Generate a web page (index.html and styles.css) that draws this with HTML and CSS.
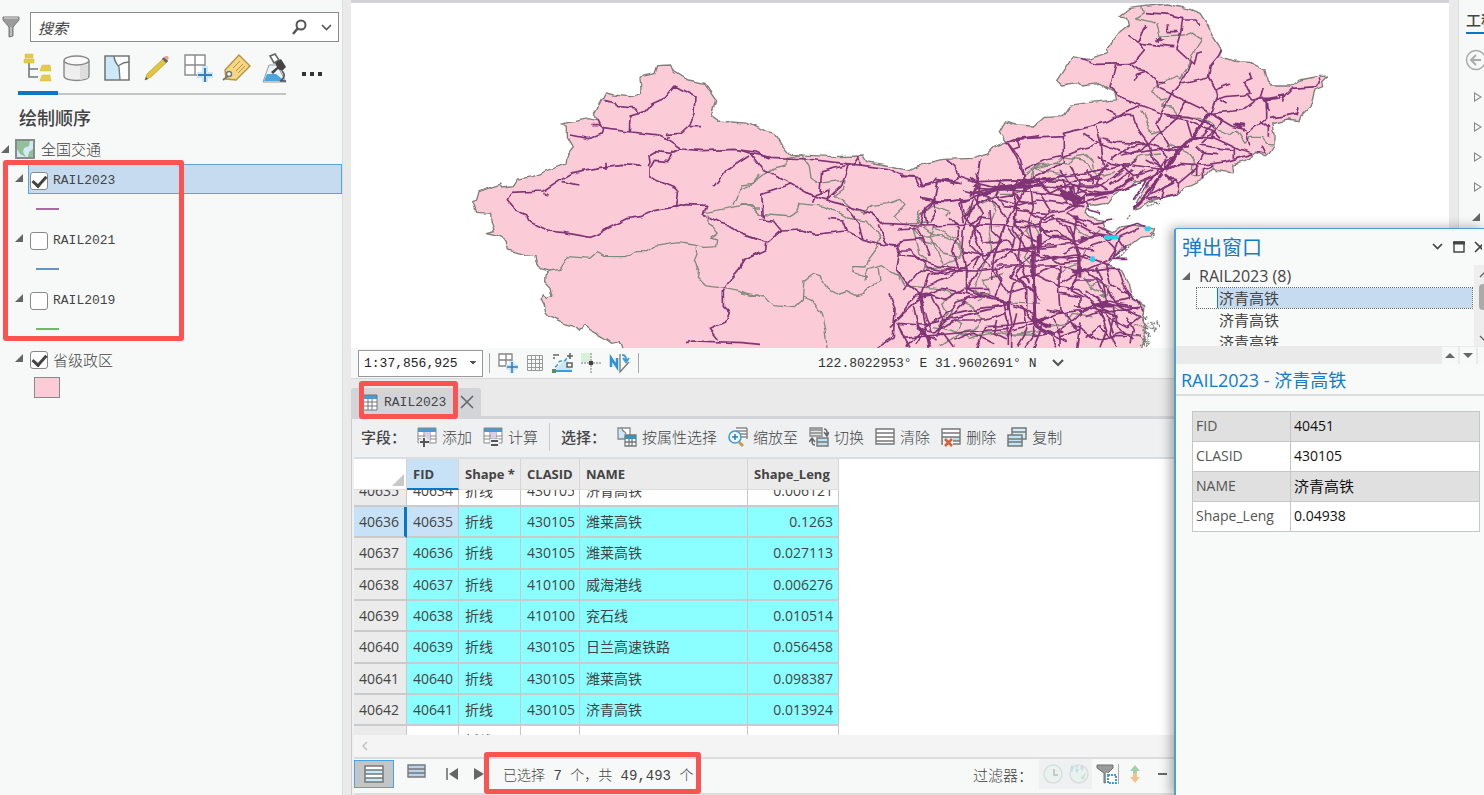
FILE: index.html
```html
<!DOCTYPE html>
<html lang="zh-CN">
<head>
<meta charset="utf-8">
<title>全国交通</title>
<link rel="stylesheet" href="styles.css">
</head>
<body>
<div class="app">
  <aside class="contents">
    <div class="search-row">
      <svg class="funnel" width="18" height="22" viewBox="0 0 18 22"><path d="M1 1h16v3l-6 7v9l-4 1V11L1 4z" fill="#9b9b9b" stroke="#777"/><path d="M2 2h14" stroke="#ddd"/><path d="M9 11v9" stroke="#ddd"/></svg>
      <div class="search-box">
        <input class="search-input" type="text" placeholder="搜索" aria-label="搜索">
        <svg width="44" height="18" viewBox="0 0 44 18" fill="none" stroke="#555"><circle cx="10" cy="7" r="4.500" stroke-width="2"/><path d="M7 10l-5 6" stroke-width="2.500"/><path d="M31 7l4.500 4.500L40 7" stroke-width="1.600"/></svg>
      </div>
    </div>
    <nav class="views">
      <button class="view active" aria-label="绘制顺序"><svg width="30" height="30" viewBox="0 0 30 30"><path d="M7 9v15h9M7 16h9" fill="none" stroke="#777" stroke-width="1.600"/><g fill="#e6cb49" stroke="#d3b937" stroke-width=".5"><path d="M3 1h8v4H3zM2 6h10v4H2zM20 12h8l1 6H18zM20 22h8l1 6H18z"/></g></svg></button>
      <button class="view" aria-label="数据源"><svg width="30" height="30" viewBox="0 0 30 30"><path d="M2 8v15c0 6 25 6 25 0V8" fill="#eee" stroke="#888" stroke-width="1.400"/><path d="M18 12h8v13l-8 2z" fill="#ddd"/><ellipse cx="14.500" cy="7.500" rx="12.500" ry="4.500" fill="#fafafa" stroke="#888" stroke-width="1.400"/></svg></button>
      <button class="view" aria-label="选择"><svg width="30" height="30" viewBox="0 0 30 30"><path d="M3 3h24v24H3z" fill="#fff"/><path d="M3 3h9l5 11 1 13H3z" fill="#cde8f8"/><path d="M12 3c0 6 3 8 5 11l1 13M16 13c3-2 5-4 11-4" fill="none" stroke="#777" stroke-width="1.400"/><path d="M3 3h24v24H3z" fill="none" stroke="#777" stroke-width="1.600"/></svg></button>
      <button class="view" aria-label="编辑"><svg width="30" height="30" viewBox="0 0 30 30"><path d="M3 27l2-6L22 5l4 3L9 24z" fill="#e2c53f" stroke="#b99a2b" stroke-width=".7"/><path d="M20 6l2-2 4 4-2 2z" fill="#666"/><path d="M22 4l2-1c3 0 3 2 2 4z" fill="#f09a93"/><path d="M3 27l1-3 2 2z" fill="#555"/></svg></button>
      <button class="view" aria-label="捕捉"><svg width="32" height="30" viewBox="0 0 32 30"><path d="M3 2h20v20H3zM13 2v20M3 12h20" fill="#fff" stroke="#8a8a8a" stroke-width="1.400"/><path d="M23 13v16M15 22h16" stroke="#cbe8fb" stroke-width="6"/><path d="M23 15v14M16 22h14" stroke="#347fb5" stroke-width="2"/></svg></button>
      <button class="view" aria-label="标注"><svg width="30" height="30" viewBox="0 0 30 30"><path d="M3 17L17 2l11 11-14 14-10-1z" fill="#f4d684" stroke="#b9923f" stroke-width="1.400"/><path d="M11 15l7-7m-4 10l7-7m-5 9l7-7" stroke="#b9923f"/><circle cx="7" cy="21" r="2.500" fill="#fff" stroke="#777" stroke-width="1.500"/><path d="M6 23l-5 4" stroke="#777" stroke-width="2"/></svg></button>
      <button class="view last" aria-label="地统计"><svg width="30" height="30" viewBox="0 0 30 30"><path d="M9 12h8l9 17H3z" fill="#e9f4fb" stroke="#999"/><path d="M7 21h9l9 7H4z" fill="#4ea5de"/><path d="M10 3l5-2 4 6-5 3z" fill="#fff" stroke="#666" stroke-width="1.600"/><path d="M15 10l6-4 5 8-4 4-4-2-5 5-2-2 6-5z" fill="#444"/><path d="M22 18c4 4 2 8-2 10h6" fill="none" stroke="#555" stroke-width="1.600"/></svg></button>
      <button class="more" aria-label="更多"><i></i><i></i><i></i></button>
    </nav>
    <h2 class="heading">绘制顺序</h2>
    <div class="row map-row"><i class="tri"></i><svg width="20" height="20" viewBox="0 0 20 20"><path d="M1 1h18v18H1z" fill="#d3eaf6" stroke="#868b8c" stroke-width="2"/><path d="M2 2h13l-1 5-5 2-1 4 3 5-6-3-3-5z" fill="#93bf9a"/><path d="M14 13l4-3v8h-5z" fill="#93bf9a"/></svg><span class="cjk">全国交通</span></div>
    <div class="row layer selected-layer"><i class="tri"></i><label class="layer-label"><input class="check" type="checkbox" checked>RAIL2023</label></div>
    <div class="legend"><i class="stroke purple"></i></div>
    <div class="row layer"><i class="tri"></i><label class="layer-label"><input class="check" type="checkbox">RAIL2021</label></div>
    <div class="legend"><i class="stroke blue"></i></div>
    <div class="row layer"><i class="tri"></i><label class="layer-label"><input class="check" type="checkbox">RAIL2019</label></div>
    <div class="legend"><i class="stroke green"></i></div>
    <div class="row layer"><i class="tri"></i><label class="layer-label cjk"><input class="check" type="checkbox" checked>省级政区</label></div>
    <div class="legend"><i class="swatch"></i></div>
    <div class="mark mark-layers"></div>
  </aside>

  <main class="workspace">
    <section class="map-view">
      <svg class="map" viewBox="1053 9 3294 1035" role="img" aria-label="全国铁路地图">
        <defs><filter id="coast" x="0" y="0" width="1" height="1" color-interpolation-filters="sRGB"><feTurbulence type="fractalNoise" baseFrequency=".035" numOctaves="1" seed="4"/><feDisplacementMap in="SourceGraphic" scale="18" xChannelSelector="R" yChannelSelector="G"/></filter></defs>
        <g filter="url(#coast)">
        <path class="land" d="M1870 1060L1858 1025 1835 1030 1810 1012 1775 992 1755 977 1738 993 1725 980 1690 970 1650 950 1637 935 1633 915 1623 895 1630 885 1642 895 1656 890 1650 862 1634 845 1635 825 1648 813 1620 805 1608 785 1605 767 1575 764 1525 750 1518 720 1492 705 1458 698 1483 692 1473 665 1472 640 1430 637 1418 605 1430 600 1437 575 1472 562 1502 552 1508 564 1540 560 1555 537 1595 530 1695 492 1698 468 1720 440 1702 410 1702 382 1685 372 1765 356 1792 362 1783 340 1816 278 1840 285 1892 290 1925 280 1920 240 1930 228 1965 220 1973 197 2012 195 2020 215 2065 243 2115 253 2147 300 2132 350 2150 363 2250 370 2300 395 2325 400 2350 440 2370 463 2500 470 2590 468 2600 485 2660 495 2700 505 2730 512 2770 492 2830 478 2920 475 2960 462 2980 442 3020 425 2998 395 3015 365 3050 375 3100 378 3130 352 3190 350 3215 315 3260 308 3350 300 3345 280 3300 250 3245 258 3235 248 3185 255 3170 242 3217 170 3265 178 3325 157 3322 145 3360 95 3385 75 3380 55 3358 50 3390 25 3430 20 3500 12 3570 28 3600 40 3620 70 3640 110 3662 145 3665 170 3700 183 3750 187 3795 210 3802 240 3815 258 3870 258 3900 240 3950 230 3982 228 3965 245 3968 260 3945 270 3930 320 3905 345 3900 365 3860 360 3815 372 3822 400 3822 435 3805 462 3795 470 3770 458 3735 482 3695 492 3698 518 3650 512 3640 502 3610 535 3560 560 3535 582 3490 592 3445 605 3420 622 3402 628 3412 600 3430 570 3448 555 3435 543 3405 542 3390 560 3360 575 3335 590 3320 610 3290 615 3265 615 3255 635 3268 653 3305 660 3312 685 3340 698 3365 680 3400 675 3445 682 3465 688 3455 708 3420 712 3390 735 3365 745 3340 770 3322 795 3365 812 3385 850 3392 885 3435 920 3425 960 3440 980 3435 1010 3422 1060z"/>
        <g class="border" transform="translate(1380 150)">
          <path d="M268 663l32-5 25-38 65 5 20-18 25 12 60 1 35-15 30 0 20-15 75-12 52 8 25 6 35-2 3-20-15-5 20-15-15-18-17-12 2-26M735 488L860 464 880 474 900 474M822 464l10-24 12-35 36-5 20-25M708 592l3 20-8 20 13 30-4 20 25 25 60 9 103 26"/>
        </g>
        <g class="border" transform="translate(2220 150)">
          <path d="M0 418l30-12 40-30 30-18 38-10 0-26 50-8 20 35 5 35 22 16 80-10-5 28-25 18 30 20 22 20 32 14 25-24 50-5 35-13 16 18-30 32 20 24 90-3M0 463l35 5 25 25 60 5 30 2 20-12 7-27 30 3 40 5 40 15 35 20 60 10 25 30 12 22-8 25-30 40-6 20-40-2 5 18 42 12-10 8 13-28 40-12 25 20 25 8 20 33 60 4 40 3 45 18-35 30 20 30-30 35M0 731l35 8 40-2 28 30 60 6 27-25 5-60 25-17 20 6 30 45 20 10 30-10 30 15 20-8 27-25 26-10-6-40M190 738l25 10 28 40 12 50 6 57M520 540l20 70 20 20-10 35 60-20 50-20 0-50-60-35-20-10-10 30 40 80M620 500l10-15-50-20-40 30-20 40 20 25 60-5M700 420l45 20 20 40-18 60 8 60-30 60-22 50M780 430l50 0 40-20-20-35 50-30M830 560l50-40 20 40M640 770l-10 30 35 20-20 30M580 830l50 10 60 25 50-20 60 10 100-10M700 720l30 15 60 20 110 5"/>
        </g>
        <g class="border" transform="translate(3000 0)">
          <path d="M425 20L430 38 405 55 455 65 470 72 480 108 550 105 570 95 605 118 575 165 570 190 545 225 540 240 528 228 470 258 458 272 480 300 500 295 485 315 515 318 530 350 600 352 635 368 650 388 690 405 710 392 735 430 750 412 785 412 800 430 822 432M425 332l20 28-5 30 15 12 40-12M100 510l0 30 75 0 5-20-40-5-35-10 60-15 40 5 20-25 35-5 20 20 5 35 30 5 30-10M500 450l10-18 50 22 20 30-5 40 30 0M340 490l40 12 40-35 60-5"/>
        </g>
        <g class="border" transform="translate(2700 450)">
          <path d="M60 180l-5 40 40 30 50 12 40 30-10 30-45-10-20-30-50-12M190 200l20-25 60-25 30-30 50-5 40-10M390 80l20-35 60-5 20-20 60 10 40 50M400 210l-20 30 20 40-30 40 30 30M560 300l-20 40-40 15-30 30M550 380l20 30 40 20 10 30 40 20M120 590l60-40 50 10 70-15 50 10 60 0M600 240l-20 20-40-10-20-30M570 405l30-8 30 12-5 25-30 5M170 450l50 20 25 40-25 30-60 10M310 370l-60 20 20 40-40 20M440 530l60-10 20-30 60 10"/>
        </g>
        <g class="rail" transform="translate(1380 150)">
          <path d="M430 148l35 8 8 14 58 4 4 18 20-8 20-22 40-18 30-36 60 32-3 50-14 38-24 22-46 3M508 247l2-49 28-8M394 224l20 0 16 12 80 10 80 8 33 15 42 28 60 5 100-4 60 8 40 18M414 210l14 28-5 12-38 16-55-11M690 230h33M565 352l5-15-3-20 20-12 48 5 25-14M570 355l13-24 42 4 15-33M570 355l0 25 15 10 60 25 10 12-5 45 30-8 60 2-10 30 10 3M652 470l-70 12-40 18-40 6-60 30-30 18-20 8-80-14-45-5-60-30-10-22-30-12-25-30 12-22 95-4 60-40 30-16 80-15 65-9 60 6M305 395l53 10M435 358v-20M250 430l16 5M745 500l38 20 20 5 35 25 62 22M900 605l-50 25-20 40-25 25-15 30 0 45 15 15-12 33-45 20 24 30M678 878l20-5 150 5 52 5M762 408l35-45 70-45M620 270l5-12"/>
        </g>
        <g class="rail" transform="translate(2220 150)">
          <path d="M0 300l30 10 60 12 110 5 120 14 120 14 50 23 50 5 8 27 25-5 15-20 70 10M30 310l40 50 85 42 60 34 100 30 80 25 35 32 100 5 200-3 135 5M70 505l-5-75 88-28M60 510l40 3 25 30-40 35-80-24M80 580l-3 20-60 28-17 27M125 543l60-3 40 13 95-10 50 25 60 15 40 5 20-17 60-5M240 430l5-65 80-20-22 65-40 35M325 345l15 0 16-25 5 25M215 455l7-20 45-15-5 30M320 475l35 45 15 50M415 520l10 35 20 30 25 5 10 25 55 5 30 35 35 5 110 3 120-15 120 0M265 505l45 5 15 40M480 600l-10 60 25 35 50 40 20-60 90-25-20-50 20-40 0-25-25-30M475 540l60-5 25 50 10 35M450 730l15 50-5 80-50 35M450 830l40-40 55-50 30-5 30 65-50 30-25 55M470 820l80 5 110-25 100-25 45-15M470 820l20 45 100-10 160-15 60-5M470 820l40 75M540 740l15 80 10 75M545 740l60-25 95 20 80 15 60 20 50 50M590 860l20-60 40-40 80-30 60 20 15 75 0 60M620 330l25 20 10 30-15 20-45-10-13 60-42-8M655 380l55 20 10-70-10 60-10 50 30 50-30 60 30 70 20 30M540 530l15-60 25-20 10 40-20 30M560 525l-5-45 35-35M670 420l60 15 60-25 110-15M580 455l100-5 90-30 80-20 50-15M800 275l40 50 13 50-3 40-25 75-5 50 40 60M800 275l20-8 80-10M820 298l18-7-5-20 15-2M670 520l-10-60 80-35 60-10 100-5M700 450l-30 90-5 60 15 70 0 60M750 480l5 60 30 30-40 50-30 40-35 60M665 600l70 15 85-20 80 20M755 650l50 80 60-20 35 40M840 450l-50 80-30 100-5 60M560 710l70-30 60-40 40-30"/>
        </g>
        <g class="rail" transform="translate(3000 0)">
          <path d="M435 38l70 5 43 10-5 40-15 52 55 50 8-35 15-5M548 60h40l10 16M385 108l28 20 18-42 10-10M405 180l25-30-10-20 100 10M505 73v22h28M465 120h25m-20-7l14 12m0-12l-14 12M245 178l40 15 105-2 22-10M390 190l20 18 30 5 30 30 5 20 150 73M440 213l-30 10-7 22M470 245h30M347 193l-17 70 35 33 45 15 90 35 60 3 60 15 25 25M575 190l-30 55-30 35-20 40-25 50 15 30 20 35M545 252l80-18 5-35 25-30 10-20M625 234l20 35 5 20-20 50M645 270l45-18M645 300l30-10 60-5 15-5-10-20-12-15 25-10-5-17M740 280l15 20 50-5 50-10 20-20 75-5 10-25M780 298l10-33M855 285l-8 20M800 295l0 60-60 45 10 40M740 390l-45-12-65-38M730 330l45-35 55 0M730 330l-100 10M810 355l85-15 5-20M630 340l-50 70-45 45-40 50-55 95M560 300l-35 60-80 70-20 20-60 15M630 340l35 25-30 45 65 30 60 20M580 410l60 5M575 410l-15-50-60-10M600 435l60 10 40 5M605 430l35-35 20 20M500 510l40-20 70 5 70-10 80-25M25 425l50-10 120-5-5-10 60-15 70-20 60-30 40-15M190 410l0 80-170 75M290 380l15 60 5 60M320 330l30 15 50 2 10 35 35 48-100-3-40-10M250 400l50 30 90 32 60-10 120-15M20 425l28 45 25 60 0 50M75 510l60-30 60-12 100-40M445 430l15 50 20 20M490 510l-120 60-90 20M370 500l30 30 60-20M290 470l40 20 60 10M410 480l-60 45-50 35-300 0M0 540l80 0 130 5 100-10M500 520l20 30-30 15-10 35M500 520l35 30 0 30-90 18M535 550l60-50M770 455l25 5-10-20M700 440v35M780 360l25 20 0 30M720 375l10 20"/>
          <path d="M800 320l12 12M795 305l20 -8M835 300l8-10M700 372l20 8M640 372l-30 35-40 12M660 300l20 12M570 365l70 30M540 455l-60-12-35-13M590 440l20 20 45 4M610 455l-20 40 0 30M640 495l-30 15 0 25M480 440l20 30-5 40M440 480l55 30M400 495l95 15M335 480l50-40 60-8M430 510l-20 25M395 505l-10 30M320 490l-25 40-60 15"/>
          <path class="trunk" d="M790 300l40-4M800 300l2 26M630 340l-52 72-45 45-33 50M705 372l30 4"/>
        </g>
        <g class="rail" transform="translate(2700 450)">
          <path d="M190 200l60-50 100-20 100-40 50-20M230 100l90 20 120 10 60 10 60-20 60 10M210 85l30 20-10 60M210 130l200-40 140-20 140-30M290 90l50 30 60-40 50 50 60-30 50 30-30 30M300 150l60 15 50-15 80 10 60 10M330 110l20 50-5 60 20 30-10 70 30 80M345 210l60 15 70-20 50 15 60 30 60 10M390 100l10 70-15 50 20 80 0 80M345 180l90 10 60-10 60-30M470 110l30 40 20-40 10 60-30 20M480 120l60 20M490 90l10 70M500 230l40 80-10 70-20 40 60 30 40 60M290 345l60 0 50-30 60 10 70-10 60 20 40 10M280 340l60-40 100-15 90-5 60-30M400 340l60-20 60 5M350 300l120-10M360 250l60 30 50-20 60 20M390 380l30-10 50-25 70 20 80-10 40 0M325 460l15-60 60-30 80 40 60 10 50 50 40 15 90-10M400 370l5 150 70-30 80-10 60-30 80 20M400 520l60 30 60-40 40-40 60 20 20 60M420 290l0-80 30-30-30-50M450 200l60 30 20 60M230 590l30-60 70-5 80-15M325 460l10 60 0 75M340 470l60 20 5 60-30 40M340 540l60-20 50 30 20 45M480 560l60-20 60 30 60-20 60 10M540 520l-10 75M600 480l20 60-20 55M430 520l-30 75M460 500l20 60 0 30M480 400l70-40 60 40 50 70 60 30M480 350l-5 60 5 70 60 60M360 390l40 40M350 350l-20 30 30 20M530 370l10-40-20-60 10-70M520 200l60 20 60-10M500 190l60 40M500 140l40 20 80-20M545 265l60-10 40 40-20 30 60 0M570 290l60-20 50-40 30-10 30 10M620 245l35 20 20 30-40 30-90 40M640 320l20-60 60-25M650 355l20 50 20 40-40 10M560 420l50 40 60 10M590 450l50 20 10 60 50 40M600 460l30-10M590 470l45 0M440 480l60 10 30 50M620 500l60 30 40-30M700 150l40-60 50-30 50-20M710 160l70-40 50-30M730 120l60-80 50-30"/>
          <path d="M0 80h45l15 30 40-12 25-8 60 8M60 145l75 10 75-8M235 95l130-5 90-2M230 115l80 5 60-15 80 5M225 75l10 35-25 30M240 125l30 15-45 30-30 30M265 150l30 20 25 35-20 60-20 60M300 100l-15 35 30 35 45 5M355 90l-15 35 20 30 50 5M320 230l25 30-10 40 20 30M240 215l-25 30-5 40 30 30-20 40M210 230l30-30 30 5M185 150l10 55 35 30 20 40M250 280l70-10 20 20M380 180l50 30 30-15M380 230l40 0 30 30 50 0M375 300l40 0M420 240l50 5 40 25 40 0M490 310l40-20 50 10M500 330l60-15 40 25M430 310l50 30 60-5M450 345l30 20 0 50M370 340l-25 35 35 45 0 60M200 370l0 45 60 30 60 10M285 350l20 40-20 50M130 450l60-35 75 0M210 440l-60 60-50 50M160 490l80-15 80-10M110 540l60-30 90 0 60-20M290 510l-10 40 40 20M350 490l-10 40-20 30M370 480l10 60-30 50M400 560l50-10 50 25M440 500l-30 30 30 20M480 430l60 10 0 60M500 420l30-30 60 0 20 40M520 470l60 5M560 500l50-20 40 20M560 560l40-30 30 30 50 0M640 500l-10 50 20 40M680 430l30 20 20 35M655 465l60 15M590 350l20 50 10 60M620 345l15 60 45 25M680 500l20 40-10 40M590 230l40 15M600 190l-30-10-20-30M540 105l60 0M560 60l20 40M510 50l30 50-10 40M610 60l-20 40 30 20M480 60l30 40M630 105l40-30 30-15M0 300l30 0 30 30 60 20 80 5M10 420l50-60 70 10 70-10M0 500l40-60 40-10 60 20M20 590l40-40 50 20M60 540l70 10 30 40M160 570l60-20 60 30M40 470l20 80M60 430l20 80 20 40"/>
          <path class="trunk" d="M480 130l40 5 20 20M490 125l35 30M500 145l55 0M510 110l15 60M480 120l20 25M398 310l0 70M400 380l5 130 45 20M415 250l0 60M520 365l30 0M535 320l5 60M90 565l-35-30M80 560l10 30M600 455l10 20M580 465l50 0M220 105l15 10M700 176l25-25 25-35 40-45M560 135l80-10 60-40M430 510l-30 10M470 545l20 0M325 450l0 30"/>
        </g>
        <g class="border isles" transform="translate(2700 450)"><path d="M690 195l-10 15M740 165l45-12M760 155l20 10M750 250l15 5-10 10M690 285l-15 20-20 20M715 465l20 12-5 25M725 510l20-10M745 515l-5 20 30-20M755 515l5 30 10-15M730 540l20 10-10 30-20 10M735 520l-5 60 10-20M770 520l12 8M700 525l20 5M695 560l25 0M720 470l15-5M710 500l30 5M725 530l35 10M740 545l15 15M720 560l20 20M735 590l15-15"/></g>
        </g>
        <g class="picked"><path d="M3318 712h32"/><path d="M3442 685h5M3440 687h6M3276 775h3M3276 780h3"/></g>
      </svg>
    </section>

    <div class="status">
      <select class="scale" aria-label="比例尺"><option>1:37,856,925</option></select>
      <i class="sep"></i>
      <svg width="20" height="20" viewBox="0 0 20 20"><path d="M1 1h13v12H1zM8 1v12M1 7h13" fill="#fff" stroke="#858585" stroke-width="1.300"/><path d="M14 8v12M8 14h12" stroke="#c5e5fa" stroke-width="5"/><path d="M14 9v11M9 14h11" stroke="#2f7bb3" stroke-width="1.500"/></svg>
      <svg width="18" height="18" viewBox="0 0 18 18"><path d="M1.500 1.500h15v15h-15zM5.500 1v15M9.500 1v15M13.500 1v15M1 5.500h15M1 9.500h15M1 13.500h15" fill="none" stroke="#999"/></svg>
      <svg width="21" height="20" viewBox="0 0 21 20"><path d="M3 17L14 5l6 12z" fill="#cbe6f7"/><path d="M3 14c4-1 2-7 7-6s3-4 8-5" fill="none" stroke="#3f9bd7" stroke-width="1.500" stroke-dasharray="4 2"/><path d="M1 2h6M15 3h6M18 0v6M15 10h5v4h-5zM1 5h2" fill="#fff" stroke="#666" stroke-width="1.600"/><path d="M2 18h18" stroke="#3f9bd7" stroke-width="2"/><path d="M0 16h4v4H0z" fill="#4d9658"/></svg>
      <svg width="20" height="20" viewBox="0 0 20 20"><path d="M0 0h9v9H0z" fill="#d8efd8"/><path d="M0 10h20M10 0v20" stroke="#777" stroke-dasharray="2 1"/><path d="M8 8h4v4H8z" fill="#444"/></svg>
      <svg width="21" height="20" viewBox="0 0 21 20"><path d="M2 14V5l6 9V5" fill="none" stroke="#2e92d4" stroke-width="2.500"/><path d="M11 1v18l9-10" fill="none" stroke="#777" stroke-width="1.300"/><path d="M13 2c4 0 4 3 4 6m-3-3l3 4 3-4" fill="none" stroke="#3f9bd7" stroke-width="2"/></svg>
      <i class="sep"></i>
      <span class="coords">122.8022953° E 31.9602691° N</span>
      <svg class="chev" width="12" height="8" viewBox="0 0 12 8"><path d="M1 1l5 5 5-5" fill="none" stroke="#555" stroke-width="2.200"/></svg>
    </div>

    <div class="tabs">
      <div class="tab"><svg width="16" height="17" viewBox="0 0 16 17"><path d="M1 1h14v15H1z" fill="#fff"/><path d="M1 1h14v4H1z" fill="#4b9bd0"/><path d="M1 1h14v15H1zM6 5v11M10 5v11M1 8h14M1 12h14" fill="none" stroke="#777"/></svg><span class="mono">RAIL2023</span><button class="close" aria-label="关闭"><svg width="14" height="14" viewBox="0 0 14 14"><path d="M1 1l12 12M13 1L1 13" stroke="#666" stroke-width="1.600"/></svg></button></div>
      <div class="mark mark-tab"></div>
    </div>

    <section class="table-panel">
      <div class="toolbar">
        <b>字段：</b>
        <button><svg width="20" height="20" viewBox="0 0 20 20"><path d="M1 1h18v15H1z" fill="#fff"/><path d="M1 1h18v4H1z" fill="#4b9bd0"/><path d="M1 1h18v15H1zM7 5v11M13 5v11M1 9h18M1 12h18" fill="none" stroke="#888"/><path d="M8 5h5v11H8z" fill="#d9cfea"/><path d="M7 10v9M2 15h10" stroke="#eef0f2" stroke-width="5"/><path d="M7 11v9M3 15h9" stroke="#555" stroke-width="2"/></svg>添加</button>
        <button><svg width="20" height="20" viewBox="0 0 20 20"><path d="M1 1h18v15H1z" fill="#fff"/><path d="M1 1h18v4H1z" fill="#4b9bd0"/><path d="M1 1h18v15H1zM7 5v11M13 5v11M1 9h18M1 12h18" fill="none" stroke="#888"/><path d="M8 5h5v6H8z" fill="#d9cfea"/><path d="M7 12h9v8H7z" fill="#eef0f2"/><path d="M8 14h7M8 18h7" stroke="#555" stroke-width="2"/></svg>计算</button>
        <i class="divider"></i>
        <b>选择：</b>
        <button><svg width="20" height="20" viewBox="0 0 20 20"><path d="M1 1h12v11H1z" fill="#fff"/><path d="M1 1h4l3 5v6H1z" fill="#cde8f8"/><path d="M1 1h12v11H1zM5 1c0 5 3 2 4 6" fill="none" stroke="#888" stroke-width="1.300"/><path d="M8 8h11v11H8z" fill="#fff"/><path d="M8 8h11v4H8z" fill="#3d8fc6"/><path d="M8 8h11v11H8zM12 12v7M15 12v7M8 15h11" fill="none" stroke="#777" stroke-width="1.300"/></svg>按属性选择</button>
        <button><svg width="20" height="20" viewBox="0 0 20 20"><path d="M8 1h11v11H8z" fill="#fff"/><path d="M8 1h11M8 4h11M8 7h11M8 10h11M19 1v11" stroke="#888" stroke-width="1.500"/><circle cx="7" cy="10" r="6" fill="#eef8fe" stroke="#4a9bd0" stroke-width="1.600"/><path d="M4 10h6M7 7v6" stroke="#2b7db5" stroke-width="1.500"/><path d="M11 15l4 4" stroke="#c49b58" stroke-width="3"/></svg>缩放至</button>
        <button><svg width="20" height="20" viewBox="0 0 20 20"><path d="M1 1h12v8H1zM1 3h12M1 6h12" fill="#e4e4e4" stroke="#888" stroke-width="1.300"/><path d="M8 11h11v8H8zM8 15h11" fill="#bfe1ef" stroke="#777" stroke-width="1.400"/><path d="M15 2c3 0 3 2 3 6m-3-3l3 4 2-4M6 18c-3 0-3-2-3-6m-3 3l3-4 3 4" fill="none" stroke="#666" stroke-width="1.500"/></svg>切换</button>
        <button><svg width="20" height="20" viewBox="0 0 20 20"><path d="M1 2h18v15H1zM1 6h18M1 10h18M1 14h18" fill="#fff" stroke="#777" stroke-width="1.400"/></svg>清除</button>
        <button><svg width="20" height="20" viewBox="0 0 20 20"><path d="M1 2h18v15H1z" fill="#fff"/><path d="M1 10h18v4H1z" fill="#aee0f2"/><path d="M1 2h18v15H1zM1 6h18M1 10h18M1 14h18" fill="none" stroke="#777" stroke-width="1.400"/><path d="M2 11h10v9H2z" fill="#eef0f2"/><path d="M4 12l7 7m0-7l-7 7" stroke="#d3623b" stroke-width="2.500"/></svg>删除</button>
        <button><svg width="20" height="20" viewBox="0 0 20 20"><path d="M5 1h14v11H5zM5 5h14" fill="#d0eff8" stroke="#777" stroke-width="1.500"/><path d="M1 8h14v11H1zM1 12h14M1 15h14" fill="#bce7f4" stroke="#777" stroke-width="1.500"/></svg>复制</button>
      </div>
      <div class="grid-view">
        <table class="grid">
          <colgroup><col class="c-row"><col class="c-fid"><col class="c-shape"><col class="c-clas"><col class="c-name"><col class="c-leng"></colgroup>
          <thead><tr><th class="corner"><i></i></th><th class="sorted">FID</th><th>Shape *</th><th>CLASID</th><th>NAME</th><th>Shape_Leng</th></tr></thead>
          <tbody>
            <tr class="plain cut"><th><span>40635</span></th><td><span>40634</span></td><td><span>折线</span></td><td><span>430105</span></td><td><span>济青高铁</span></td><td><span>0.006121</span></td></tr>
            <tr class="current"><th>40636</th><td>40635</td><td>折线</td><td>430105</td><td>潍莱高铁</td><td>0.1263</td></tr>
            <tr><th>40637</th><td>40636</td><td>折线</td><td>430105</td><td>潍莱高铁</td><td>0.027113</td></tr>
            <tr><th>40638</th><td>40637</td><td>折线</td><td>410100</td><td>威海港线</td><td>0.006276</td></tr>
            <tr><th>40639</th><td>40638</td><td>折线</td><td>410100</td><td>兖石线</td><td>0.010514</td></tr>
            <tr><th>40640</th><td>40639</td><td>折线</td><td>430105</td><td>日兰高速铁路</td><td>0.056458</td></tr>
            <tr><th>40641</th><td>40640</td><td>折线</td><td>430105</td><td>潍莱高铁</td><td>0.098387</td></tr>
            <tr><th>40642</th><td>40641</td><td>折线</td><td>430105</td><td>济青高铁</td><td>0.013924</td></tr>
            <tr class="plain"><th>40643</th><td></td><td>折线</td><td></td><td></td><td></td></tr>
          </tbody>
        </table>
      </div>
      <div class="hscroll"><svg width="6" height="10" viewBox="0 0 6 10"><path d="M5 1L1 5l4 4" fill="none" stroke="#bbb" stroke-width="1.300"/></svg></div>
      <div class="footer">
        <button class="mode on" aria-label="显示所有记录"><svg width="20" height="18" viewBox="0 0 20 18"><path d="M1 1h18v16H1z" fill="#fff"/><path d="M1 5h18v4H1zM1 13h18v4H1z" fill="#c3ebf7"/><path d="M1 1h18v16H1zM1 5h18M1 9h18M1 13h18" fill="none" stroke="#777" stroke-width="1.500"/></svg></button>
        <button class="mode" aria-label="显示所选记录"><svg width="19" height="14" viewBox="0 0 19 14"><path d="M1 1h17v12H1zM1 5h17M1 9h17" fill="#b9d2ec" stroke="#777" stroke-width="1.400"/></svg></button>
        <button class="step" aria-label="第一条"><svg width="12" height="12" viewBox="0 0 12 12"><path d="M1 0v12" stroke="#666" stroke-width="1.500"/><path d="M12 0v12L3 6z" fill="#666"/></svg></button>
        <button class="step next" aria-label="下一条"><svg width="10" height="12" viewBox="0 0 10 12"><path d="M0 0l10 6-10 6z" fill="#666"/></svg></button>
        <span class="count">已选择 7 个，共 49,493 个<span class="mark mark-count"></span></span>
        <div class="filters">
          <span class="cjk">过滤器：</span>
          <span class="disabled"><svg width="20" height="20" viewBox="0 0 20 20"><circle cx="10" cy="10" r="9" fill="#e9f2ee" stroke="#d9dfdd" stroke-width="1.500"/><path d="M11 5v6h4" fill="none" stroke="#c3ccc9" stroke-width="2"/></svg><svg width="20" height="20" viewBox="0 0 20 20"><circle cx="10" cy="10" r="9" fill="#e9f2ee" stroke="#d9dfdd" stroke-width="1.500"/><path d="M3 1v7M8 1v8M13 1v6M1 4h4M6 6h4M11 4h4" stroke="#c9dde7" stroke-width="1.500"/><path d="M11 14l6-6-2 8z" fill="#cfe3d7"/></svg></span>
          <svg width="22" height="20" viewBox="0 0 22 20"><path d="M1 1h16v3l-5 5v9l-4 1V9L1 4z" fill="#9a9a9a" stroke="#707070"/><path d="M10 9h11v11H10z" fill="#fff"/><path d="M12 11h8v8h-8z" fill="none" stroke="#3f9bd7" stroke-width="2" stroke-dasharray="2 1"/></svg>
          <i class="sep"></i>
          <svg class="updown" width="12" height="20" viewBox="0 0 12 20"><path d="M6 1l5 6H8v4H4V7H1z" fill="#a4cfae"/><path d="M6 19l5-6H8V9H4v4H1z" fill="#efc391"/></svg>
          <svg class="minus" width="9" height="3" viewBox="0 0 9 3"><path d="M0 0h9v2H0z" fill="#666"/></svg>
        </div>
      </div>
    </section>
  </main>

  <aside class="dock">
    <h3>工程</h3>
    <svg class="back" width="22" height="22" viewBox="0 0 22 22"><circle cx="11" cy="11" r="9.500" fill="none" stroke="#aaa" stroke-width="1.500"/><path d="M16 11H6m5-5l-5 5 5 5" fill="none" stroke="#aaa" stroke-width="2"/></svg>
    <i class="arrow"></i><i class="arrow"></i><i class="arrow"></i><i class="arrow"></i><i class="tri"></i>
  </aside>

  <section class="popup">
    <header class="popup-title"><h1>弹出窗口</h1>
      <svg width="50" height="14" viewBox="0 0 50 14" fill="none" stroke="#444"><path d="M1 4l4.500 4.500L10 4" stroke-width="1.700"/><path d="M22 2h10v10H22z" stroke-width="1.400"/><path d="M21 3h12" stroke-width="3"/><path d="M43 2l10 10M53 2L43 12" stroke-width="1.600"/></svg>
    </header>
    <div class="results">
      <div class="result-head"><i class="tri"></i>RAIL2023 (8)</div>
      <div class="result picked-result"><span>济青高铁</span></div>
      <div class="result"><span>济青高铁</span></div>
      <div class="result"><span>济青高铁</span></div>
      <div class="vscroll"><svg width="10" height="6" viewBox="0 0 10 6"><path d="M1 5l4-4 4 4" fill="none" stroke="#666" stroke-width="1.300"/></svg><i></i><svg width="10" height="6" viewBox="0 0 10 6"><path d="M1 1l4 4 4-4" fill="none" stroke="#666" stroke-width="1.300"/></svg></div>
    </div>
    <div class="splitter"><button aria-label="上移"><i class="up"></i></button><button aria-label="下移"><i class="down"></i></button><i class="nub"></i></div>
    <h2 class="popup-feature">RAIL2023 - 济青高铁</h2>
    <table class="attrs">
      <tr><th>FID</th><td>40451</td></tr>
      <tr><th>CLASID</th><td>430105</td></tr>
      <tr><th>NAME</th><td class="attr-name">济青高铁</td></tr>
      <tr><th>Shape_Leng</th><td>0.04938</td></tr>
    </table>
  </section>
</div>
</body>
</html>
```
FILE: styles.css
```css
* { box-sizing: border-box; }
body { margin: 0; background: #eaeaea; color: #444; font: 14px "Open Sans", "Noto Sans CJK SC", sans-serif; }
button { border: 0; background: none; padding: 0; margin: 0; color: inherit; font: inherit; }
h1, h2, h3 { margin: 0; font-weight: 400; }
svg { display: block; flex: none; }
i { flex: none; }

.app { position: relative; display: grid; grid-template-columns: 343px minmax(0, 1fr) 26px; column-gap: 8px; height: 100vh; overflow: hidden; }
.cjk { font-family: "Noto Sans CJK SC", sans-serif; font-size: 15px; font-weight: 300; }
.mono, .coords, .scale, .layer-label { font-family: "Liberation Mono", monospace; font-size: 13px; }
.tri { width: 0; height: 0; border-left: 8px solid transparent; border-bottom: 8px solid #666; }
.mark { position: absolute; border: 5px solid #fb5252; border-radius: 3px; pointer-events: none; }

/* contents pane */
.contents { position: relative; background: #f7f9f8; border-right: 1px solid #ddd; padding-top: 12px; }
.search-row { display: flex; align-items: center; gap: 10px; padding: 0 3px 0 2px; }
.search-box { flex: 1; display: flex; align-items: center; height: 30px; border: 1px solid #8b8b8b; background: #fff; padding: 0 3px 0 7px; }
.search-input { flex: 1; min-width: 0; border: 0; outline: 0; background: none; font: italic 15px "Noto Sans CJK SC", sans-serif; padding: 0; }
.search-input::placeholder { color: #444; }
.views { display: flex; align-items: flex-start; height: 53px; padding: 11px 0 0 18px; }
.view { display: flex; align-items: flex-start; flex: none; width: 40px; height: 42px; padding: 0 4px; border-bottom: 2px solid #c4c4c4; }
.view.active { border-bottom: 4px solid #0b76c5; }
.view.last { width: 28px; padding: 0 2px; }
.more { display: flex; gap: 4px; margin: 19px 0 0 16px; }
.more i { width: 4px; height: 4px; background: #333; }
.heading { padding: 9px 0 0 19px; height: 39px; font: 500 18px/26px "Noto Sans CJK SC", sans-serif; }
.row { display: flex; align-items: center; height: 30px; }
.map-row { padding-left: 1px; gap: 6px; }
.map-row .cjk { line-height: 20px; }
.layer { padding-left: 15px; gap: 6px; }
.layer > .tri { margin-bottom: 2px; }
.layer-label { flex: 1; display: flex; align-items: center; gap: 5px; height: 30px; margin-left: -1px; padding: 3px 0 0 1px; border: 1px solid transparent; }
.layer-label.cjk { padding-top: 0; font: 300 15px "Noto Sans CJK SC", sans-serif; }
.selected-layer .layer-label { background: #c6dbef; border-color: #58a5da; }
.check { appearance: none; display: grid; place-items: center; flex: none; width: 18px; height: 18px; margin: 1px 0 0; background: #fff; border: 1px solid #888; border-radius: 3px; }
.check:checked::after { content: ""; width: 6px; height: 11px; border: solid #444; border-width: 0 3px 3px 0; transform: translateY(-1px) rotate(42deg); }
.legend { display: flex; align-items: center; height: 30px; padding-left: 34px; }
.stroke { width: 23px; height: 2px; margin-left: 2px; }
.purple { background: #ab6ba0; }
.blue { background: #6596c0; }
.green { background: #6dbb68; }
.swatch { width: 26px; height: 21px; margin-top: -3px; background: #fccbd8; border: 1px solid #888; }
.mark-layers { left: 3px; top: 160px; width: 181px; height: 181px; }

/* map */
.workspace { display: flex; flex-direction: column; min-width: 0; min-height: 0; margin-right: 1px; }
.map-view { flex: none; border-top: 3px solid #d3d3d8; background: #fff; }
.map { width: 100%; height: auto; }
.land { fill: #fccbd8; stroke: #7c7f7a; stroke-width: 4; }
.border, .rail { fill: none; stroke-linejoin: round; }
.border { stroke: #808a7c; stroke-width: 4; }
.isles { stroke: #777; stroke-dasharray: 6 3; }
.rail { stroke: #803476; stroke-width: 5; }
.trunk { stroke-width: 9; }
.picked { stroke: #2ad2ea; stroke-width: 13; stroke-linecap: round; fill: none; }
.status { flex: none; display: flex; align-items: center; height: 31px; padding-left: 7px; background: #f7f9f8; border-bottom: 1px solid #d8d8d8; gap: 8px; }
.scale { appearance: none; width: 125px; height: 27px; border: 1px solid #999; border-radius: 0; padding: 0 5px; color: #222; background: linear-gradient(45deg, transparent 50%, #555 50%) no-repeat right 9px center / 3px 4px, linear-gradient(-45deg, transparent 50%, #555 50%) no-repeat right 6px center / 3px 4px, #fff; }
.sep { width: 1px; height: 20px; background: #aaa; }
.scale + .sep { margin-left: -2px; }
.coords { margin-left: 171px; color: #333; white-space: nowrap; }
.chev { margin-left: 8px; }

/* attribute table */
.tabs { flex: none; position: relative; height: 40px; padding-top: 9px; border-bottom: 3px solid #d3d4d8; }
.tab { display: flex; align-items: center; width: 130px; height: 28px; padding-left: 11px; gap: 6px; background: #d3d4d8; border-radius: 3px 3px 0 0; }
.close { margin-left: 8px; }
.mark-tab { left: 8px; top: 2px; width: 99px; height: 38px; }
.table-panel { flex: 1; min-height: 0; display: flex; flex-direction: column; padding-left: 2px; border-left: 1px solid #ccc; background: #eef0f2; }
.toolbar { flex: none; display: flex; align-items: center; height: 40px; padding: 0 0 3px 7px; gap: 11px; border-bottom: 2px solid #dcdddf; font: 300 15px "Noto Sans CJK SC", sans-serif; white-space: nowrap; }
.toolbar b { font-weight: 500; }
.toolbar button { display: flex; align-items: center; gap: 5px; }
.divider { width: 1px; height: 28px; background: #ccc; }
.grid-view { flex: 1; min-height: 0; overflow: hidden; background: #fff; }
.grid { table-layout: fixed; border-collapse: separate; border-spacing: 0; width: 485px; }
.c-row { width: 53px; } .c-fid { width: 52px; } .c-shape { width: 62px; } .c-clas { width: 59px; } .c-name { width: 168px; } .c-leng { width: 91px; }
.grid th, .grid td { height: 31px; padding: 0 5px 0 6px; text-align: left; font-weight: 400; line-height: 20px; border-right: 1px solid #c6c8ca; border-bottom: 2px solid #c9cbcd; white-space: nowrap; }
.grid tbody tr:nth-child(3n) > * { height: 32px; }
.grid tbody th { padding-left: 5px; background: #ebebeb; }
.grid thead th { font-size: 13px; font-weight: 700; background: #ebebeb; border-right-color: #d5d5d5; border-bottom: 1px solid #ddd; }
.grid thead .corner { background: #fff; vertical-align: bottom; padding: 0 2px 3px; }
.corner i { display: block; margin-left: auto; width: 0; border-left: 12px solid transparent; border-bottom: 12px solid #c8c8c8; }
.grid thead .sorted { background: #c7e2f6; border-bottom: 2px solid #0b76c5; }
.grid td { background: #8bffff; }
.grid td:last-child { text-align: right; }
.grid .plain td { background: #fff; }
.grid .cut th, .grid .cut td { height: 17px; }
.cut span { display: flex; align-items: flex-end; height: 15px; line-height: 29px; overflow: hidden; }
.cut td:last-child span { justify-content: flex-end; }
.grid .current th { background: #c7e2f6; border-right: 3px solid #0b76c5; }
.grid .current td:nth-child(2) { background: #c7e2f6; }
.hscroll { flex: none; display: flex; align-items: center; height: 24px; padding-left: 8px; background: #f4f4f4; border-bottom: 2px solid #ddd; }
.footer { flex: none; display: flex; align-items: center; height: 36px; padding: 0 282px 4px 0; background: #f7f9f8; border-bottom: 2px solid #ddd; }
.mode { display: grid; place-items: center; width: 40px; height: 28px; }
.mode.on { background: #c3c5c9; border: 1px solid #44a6df; }
.mode + .mode { width: 44px; padding-bottom: 6px; }
.step { margin-left: 8px; }
.step.next { margin-left: 16px; }
.count { position: relative; margin-left: 19px; font: 300 14px "Liberation Mono", "Noto Sans CJK SC", monospace; white-space: nowrap; }
.mark-count { left: -19px; right: -8px; top: -12px; bottom: -10px; }
.filters { display: flex; align-items: center; margin-left: auto; }
.disabled { display: flex; align-items: center; gap: 6px; height: 30px; padding: 0 3px 0 4px; margin: 0 4px 0 6px; background: #eef0f2; }
.updown { margin-left: 10px; }
.minus { margin-left: 17px; }

/* docked pane */
.dock { background: #f7f9f8; border-left: 1px solid #ddd; padding: 9px 0 0 7px; overflow: hidden; display: flex; flex-direction: column; align-items: flex-start; }
.dock h3 { flex: none; width: 32px; height: 25px; font: 500 15px/22px "Noto Sans CJK SC", sans-serif; white-space: nowrap; border-bottom: 2px solid #0b76c5; }
.back { margin: 15px 0 15px -1px; }
.arrow { width: 8px; height: 10px; margin: 6px 0 14px 8px; background: #888; clip-path: polygon(0 0, 100% 50%, 0 100%, 0 0, 1px 2px, 1px 8px, 6px 5px, 1px 2px); }
.dock .tri { margin: 7px 0 0 6px; }

/* popup window */
.popup { position: absolute; top: 228px; right: 0; bottom: 0; width: 310px; background: #f8f9f9; border: solid #4f9fd2; border-width: 1px 0 0 2px; border-radius: 3px 0 0 0; box-shadow: -3px 0 12px rgba(0, 0, 0, .35); }
.popup-title { display: flex; align-items: center; justify-content: space-between; height: 36px; padding: 0 0 1px 6px; }
.popup h1 { color: #147cc8; font: 20px "Noto Sans CJK SC", sans-serif; }
.popup-title svg { margin-right: 2px; }
.results { position: relative; height: 81px; overflow: hidden; font-size: 15px; }
.result-head { display: flex; align-items: center; height: 22px; padding-left: 6px; gap: 9px; font-size: 16px; }
.result { height: 22px; margin: 0 11px 0 20px; padding-left: 20px; border: 1px dotted transparent; line-height: 20px; }
.result span { display: block; padding-left: 2px; height: 20px; }
.picked-result { border-color: #666; }
.picked-result span { background: #c6dbef; border-left: 1px solid #147cc8; padding-left: 1px; }
.vscroll { position: absolute; top: 0; right: 0; bottom: 0; width: 10px; background: #eee; display: flex; flex-direction: column; justify-content: space-between; padding: 7px 0 5px 5px; }
.vscroll i { height: 26px; width: 12px; margin-bottom: 20px; background: #aaa; border-radius: 4px; }
.splitter { display: flex; justify-content: flex-end; gap: 2px; height: 18px; padding-top: 1px; background: #eaeaea; }
.splitter button, .nub { width: 16px; height: 17px; display: grid; place-items: center; background: #f7f9f8; }
.splitter .nub { width: 6px; }
.up { border: 5px solid transparent; border-top: 0; border-bottom-color: #666; }
.down { border: 5px solid transparent; border-bottom: 0; border-top-color: #666; }
.popup-feature { height: 32px; padding-left: 5px; color: #147cc8; font: 18px/32px "Open Sans", "Noto Sans CJK SC", sans-serif; border-bottom: 2px solid #ddd; }
.attrs { width: calc(100% - 20px); margin: 15px 4px 0 16px; border-collapse: collapse; table-layout: fixed; }
.attrs th, .attrs td { height: 30px; padding: 0 3px 2px; border: 1px solid #c6c6c6; text-align: left; font-weight: 400; line-height: 20px; background: #fff; }
.attrs th { width: 98px; color: #555; }
.attrs td { color: #111; }
.attrs .attr-name { font-size: 15px; }
.attrs tr:nth-child(odd) > * { background: #e0e0e0; }
```
